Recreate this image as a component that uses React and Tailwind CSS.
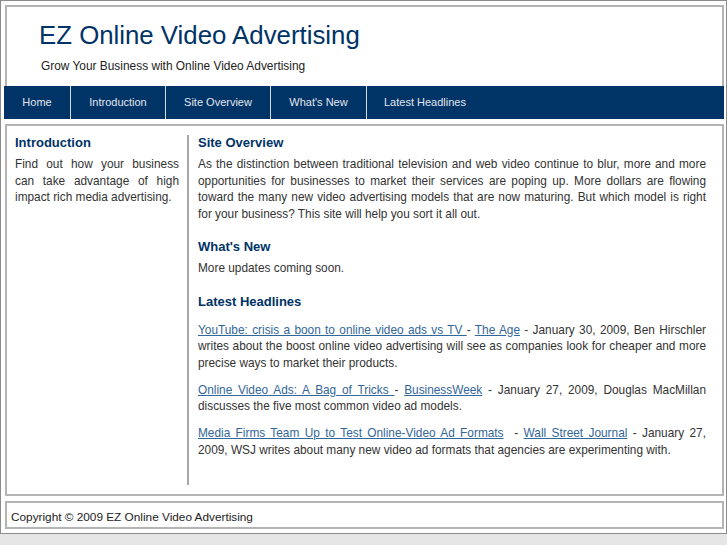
import React from "react";

const navItems = [
  { label: "Home", w: "w-[67px]", sep: true },
  { label: "Introduction", w: "w-[95px]", sep: true },
  { label: "Site Overview", w: "w-[105px]", sep: true },
  { label: "What's New", w: "w-[96px]", sep: true },
];

function A({ children }) {
  return (
    <a href="#" className="text-[#336699] underline">
      {children}
    </a>
  );
}

export default function App() {
  return (
    <div
      className="min-h-[545px] bg-[#e6e6e6] text-[#333]"
      style={{ fontFamily: '"Liberation Sans", Arial, sans-serif' }}
    >
      <div className="w-[727px] border border-[#8c8c8c] bg-white pt-[4px] pb-[4px] pl-[3px] pr-[2px]">
        {/* Header */}
        <div className="ml-[1px] h-[81px] border-2 border-b-0 border-[#b4b4b4] pt-[13px]">
          <h1 className="ml-[32px] text-[25.8px] leading-[30px] text-[#003366]">
            EZ Online Video Advertising
          </h1>
          <p className="ml-[34px] mt-[9px] text-[11.9px] leading-[14px] text-[#222]">
            Grow Your Business with Online Video Advertising
          </p>
        </div>

        {/* Nav */}
        <nav className="flex h-[33px] bg-[#003366] text-[11px] text-[#e4e6ee]">
          {navItems.map((n) => (
            <div
              key={n.label}
              className={`${n.w} flex items-center justify-center border-r border-[#d8dce6]`}
            >
              {n.label}
            </div>
          ))}
          <div className="flex items-center px-[17px]">Latest Headlines</div>
        </nav>

        {/* Content */}
        <div className="ml-[1px] mt-[5px] flex h-[372px] border-2 border-[#b4b4b4] py-[9px] pl-[8px] pr-[16px] text-[11.85px] leading-[16.7px]">
          <div className="w-[164px] shrink-0">
            <h2 className="text-[13px] font-bold leading-[15px] text-[#003366]">
              Introduction
            </h2>
            <p className="mt-[6px] text-justify">
              Find out how your business can take advantage of high impact rich
              media advertising.
            </p>
          </div>
          <div className="ml-[8px] flex-1 border-l-2 border-[#a8a8a8] pl-[9px]">
            <h2 className="text-[13px] font-bold leading-[15px] text-[#003366]">
              Site Overview
            </h2>
            <p className="mt-[6px] text-justify">
              As the distinction between traditional television and web video
              continue to blur, more and more opportunities for businesses to
              market their services are poping up. More dollars are flowing
              toward the many new video advertising models that are now
              maturing. But which model is right for your business? This site
              will help you sort it all out.
            </p>

            <h2 className="mt-[16px] text-[13px] font-bold leading-[15px] text-[#003366]">
              What's New
            </h2>
            <p className="mt-[6px]">More updates coming soon.</p>

            <h2 className="mt-[17px] text-[13px] font-bold leading-[15px] text-[#003366]">
              Latest Headlines
            </h2>
            <p className="mt-[13px] text-justify">
              <A>YouTube: crisis a boon to online video ads vs TV </A>- <A>The Age</A> -
              January 30, 2009, Ben Hirschler writes about the boost online video
              advertising will see as companies look for cheaper and more precise
              ways to market their products.
            </p>
            <p className="mt-[10px] text-justify">
              <A>Online Video Ads: A Bag of Tricks </A>- <A>BusinessWeek</A> -
              January 27, 2009, Douglas MacMillan discusses the five most common
              video ad models.
            </p>
            <div className="mt-[10px]">
              <p className="text-justify [text-align-last:justify]">
                <A>Media Firms Team Up to Test Online-Video Ad Formats</A>&nbsp; -{" "}
                <A>Wall Street Journal</A> - January 27,
              </p>
              <p>
                2009, WSJ writes about many new video ad formats that agencies are
                experimenting with.
              </p>
            </div>
          </div>
        </div>

        {/* Footer */}
        <div className="ml-[1px] mt-[5px] h-[28px] border-2 border-[#b4b4b4] pl-[4px] pt-[2px] text-[11.8px] leading-[24px] text-[#222]">
          Copyright © 2009 EZ Online Video Advertising
        </div>
      </div>
    </div>
  );
}
